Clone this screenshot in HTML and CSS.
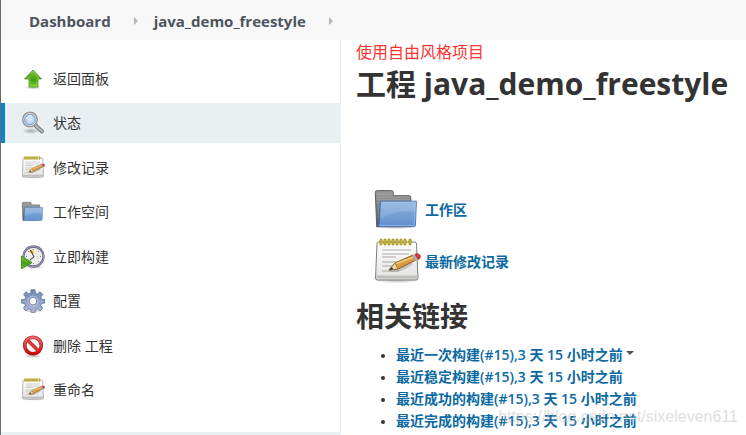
FILE: index.html
```html
<!DOCTYPE html>
<html lang="zh-CN">
<head>
  <meta charset="UTF-8">
  <meta name="viewport" content="width=device-width, initial-scale=1.0">
  <title>java_demo_freestyle [Jenkins]</title>
  <link rel="stylesheet" href="styles.css">
</head>
<body>
  <svg class="sprite" aria-hidden="true">
    <defs>
      <linearGradient id="green" x2="0" y2="1"><stop offset="0" stop-color="#86c943"/><stop offset=".6" stop-color="#43a00f"/><stop offset="1" stop-color="#7ed321"/></linearGradient>
      <linearGradient id="blue" x2="0" y2="1"><stop offset="0" stop-color="#8fb3de"/><stop offset="1" stop-color="#5e90ce"/></linearGradient>
      <linearGradient id="grey" x2="0" y2="1"><stop offset="0" stop-color="#9b9b9b"/><stop offset="1" stop-color="#5c5c5c"/></linearGradient>
      <linearGradient id="paper" x2="0" y2="1"><stop offset="0" stop-color="#ffffff"/><stop offset="1" stop-color="#e2e2e0"/></linearGradient>
      <linearGradient id="red" x2="0" y2="1"><stop offset="0" stop-color="#e86a6a"/><stop offset="1" stop-color="#cc0808"/></linearGradient>
      <linearGradient id="steel" x2="0" y2="1"><stop offset="0" stop-color="#7188b4"/><stop offset="1" stop-color="#adb9d5"/></linearGradient>
      <radialGradient id="lens"><stop offset="0" stop-color="#e4effb"/><stop offset="1" stop-color="#9dbfe8"/></radialGradient>
      <radialGradient id="shade"><stop offset="0" stop-color="#000" stop-opacity=".3"/><stop offset="1" stop-color="#000" stop-opacity="0"/></radialGradient>
    </defs>
    <symbol id="icon-up" viewBox="0 0 24 24">
      <ellipse cx="12" cy="20.500" rx="9" ry="2" fill="url(#shade)"/>
      <path d="M12 3 20.500 12H17v8H8v-8H3.500z" fill="url(#green)" stroke="#3e8d16" stroke-width=".7"/>
      <path d="M12 4.500 18 11h-2v8H9v-8H5.500" fill="none" stroke="#a9df73" stroke-width=".5"/>
    </symbol>
    <symbol id="icon-search" viewBox="0 0 24 24">
      <ellipse cx="10" cy="20" rx="9" ry="3" fill="url(#shade)"/>
      <path d="m14 14 7 6.500" stroke="#777" stroke-width="4" stroke-linecap="round"/>
      <path d="m14 14 7 6.500" stroke="#bbb" stroke-width="2" stroke-linecap="round"/>
      <circle cx="9" cy="8.500" r="7" fill="url(#lens)" stroke="#999" stroke-width="2"/>
      <circle cx="9" cy="8.500" r="6" fill="none" stroke="#f3f3f3"/>
      <circle cx="9" cy="8.500" r="5.300" fill="none" stroke="#5c8bc7" stroke-width=".8"/>
      <path d="M5.500 8C6 5 9 4 11 5" fill="none" stroke="#fff"/>
    </symbol>
    <symbol id="icon-notepad" viewBox="0 2 48 48">
      <ellipse cx="24" cy="44" rx="23" ry="3.500" fill="url(#shade)"/>
      <path d="M5.500 6h36q2 0 2 2l1.500 34q0 2-2 2H4.500q-2 0-2-2L4 8q0-2 1.500-2z" fill="url(#paper)" stroke="#7d7d7d"/>
      <path d="M3.500 39.500h41v3h-41z" fill="#bdbdbb"/>
      <path d="M9 14h29M9 18h27M9 21h14M9 26h25M9 30h19M9 35h17" stroke="#aaa"/>
      <g fill="#edda55" stroke="#9b8403"><rect x="7" y="3" width="2" height="6" rx="1"/><rect x="11" y="3" width="2" height="6" rx="1"/><rect x="15" y="3" width="2" height="6" rx="1"/><rect x="19" y="3" width="2" height="6" rx="1"/><rect x="23" y="3" width="2" height="6" rx="1"/><rect x="27" y="3" width="2" height="6" rx="1"/><rect x="31" y="3" width="2" height="6" rx="1"/><rect x="36" y="3" width="2" height="6" rx="1"/></g>
      <path d="M17 34q10 2 22-7" fill="none" stroke="#777" stroke-opacity=".35" stroke-width="3"/>
      <path d="m16 34 6-7 18-8 3 5-18 9z" fill="#d99b3e" stroke="#8b5a18"/>
      <path d="m22 28 19-7" stroke="#f3ca7b" stroke-width="1.500"/>
      <path d="m16 34 6-7 3 6z" fill="#eed9b5" stroke="#8b5a18" stroke-width=".7"/>
      <path d="m16 34 3-3 1 2z" fill="#222"/>
      <path d="m39 19.500 4-1.500 3 5-4 2z" fill="#aaa"/>
      <path d="m42 18 2-.5q5 1 3 5l-2 1z" fill="#dc3434" stroke="#a52020" stroke-width=".5"/>
    </symbol>
    <symbol id="icon-folder" viewBox="0 -2 52 52">
      <ellipse cx="24" cy="42" rx="23" ry="3" fill="url(#shade)"/>
      <path d="M4 42 2.500 5q0-2 2-2H20q2 0 2 2v3.500h17q2 0 2 2V42z" fill="url(#grey)" stroke="#555"/>
      <path d="M4 7h16M4 10h36M4 13h36M5 16h6M5 19h5M5 22h5M5 25h4M5 28h4M5 31h4" stroke="#c2c2c2" stroke-opacity=".5" stroke-width=".8"/>
      <path d="M8 14.500h39L46 40q0 2-2 2H4q2 0 2.500-3z" fill="url(#blue)" stroke="#3569aa"/>
      <path d="M9 15.500h37l-1 24q0 1.500-1.500 1.500H7" fill="none" stroke="#b3cdec" stroke-opacity=".7"/>
      <path d="M9 16h37l-.5 10Q25 23 8 34z" fill="#fff" fill-opacity=".13"/>
    </symbol>
    <symbol id="icon-clock" viewBox="0 0 24 24">
      <ellipse cx="13" cy="22" rx="10" ry="2" fill="url(#shade)"/>
      <circle cx="12.500" cy="11.500" r="10" fill="#ededeb" stroke="#6b6987" stroke-width="2.300"/>
      <circle cx="12.500" cy="11.500" r="10.200" fill="none" stroke="#a7a5bf" stroke-width=".8"/>
      <path d="M12.500 4v1M12.500 18v1M20 11.500h-1M6 11.500H5M18 6l-.7.700M18 17l-.7-.7M7 6l.7.700" stroke="#888"/>
      <path d="m7 7 5-3 1 5z" fill="#e9c64a"/>
      <path d="m9.500 5 3.500 7-4 3" fill="none" stroke="#333"/>
      <path d="M.5 11 11 17.500.5 24z" fill="url(#green)" stroke="#348514" stroke-width=".8"/>
    </symbol>
    <symbol id="icon-gear" viewBox="0 0 24 24">
      <ellipse cx="12" cy="22" rx="9" ry="2" fill="url(#shade)"/>
      <path fill="url(#steel)" fill-rule="evenodd" stroke="#536893" stroke-width=".7" d="m10 .8 4-.1.400 3.500 2 .8 2.700-2.200 2.700 2.700-2 2.800.8 2L24 10.500v3.500l-3.400.5-.9 2 2.200 2.800-2.700 2.600-2.800-2-2 .8-.5 2.700h-3.600l-.5-2.700-2-.8-2.800 2-2.600-2.600 2.100-2.800-.8-2L.4 14v-3.500l3.400-.3.800-2-2.100-2.800 2.600-2.700 2.800 2.200 1.800-.8zM12 8.300a3.800 3.800 0 1 0 0 7.600 3.800 3.800 0 0 0 0-7.600z"/>
      <circle cx="12" cy="12.100" r="5" fill="none" stroke="#c8d0e1" stroke-width=".8"/>
    </symbol>
    <symbol id="icon-stop" viewBox="0 0 24 24">
      <ellipse cx="12" cy="22" rx="9" ry="2" fill="url(#shade)"/>
      <circle cx="12" cy="11.500" r="8.300" fill="#fafafa" stroke="#b41717" stroke-width="3.600"/>
      <path d="m6.500 6 11 11" stroke="#bd1919" stroke-width="3.400"/>
      <circle cx="12" cy="11.500" r="8.300" fill="none" stroke="url(#red)" stroke-width="2.600"/>
      <path d="m6.500 6 11 11" stroke="#df3838" stroke-width="2.400"/>
    </symbol>
  </svg>

  <header class="breadcrumbs">
    <a href="#">Dashboard</a>
    <span class="separator"></span>
    <a href="#">java_demo_freestyle</a>
    <span class="separator"></span>
  </header>

  <div class="page-body">
    <aside class="side-panel">
      <nav class="tasks">
        <a class="task" href="#"><svg class="icon"><use href="#icon-up"/></svg>返回面板</a>
        <a class="task active" href="#"><svg class="icon"><use href="#icon-search"/></svg>状态</a>
        <a class="task" href="#"><svg class="icon"><use href="#icon-notepad"/></svg>修改记录</a>
        <a class="task" href="#"><svg class="icon"><use href="#icon-folder"/></svg>工作空间</a>
        <a class="task" href="#"><svg class="icon"><use href="#icon-clock"/></svg>立即构建</a>
        <a class="task" href="#"><svg class="icon"><use href="#icon-gear"/></svg>配置</a>
        <a class="task" href="#"><svg class="icon"><use href="#icon-stop"/></svg>删除 工程</a>
        <a class="task" href="#"><svg class="icon"><use href="#icon-notepad"/></svg>重命名</a>
      </nav>
      <div class="build-history"></div>
    </aside>

    <main class="main-panel">
      <div class="description">使用自由风格项目</div>
      <h1>工程 java_demo_freestyle</h1>
      <div class="shortcuts">
        <a href="#"><svg class="icon-large"><use href="#icon-folder"/></svg>工作区</a>
        <a href="#"><svg class="icon-large"><use href="#icon-notepad"/></svg>最新修改记录</a>
      </div>
      <h2>相关链接</h2>
      <ul class="permalinks">
        <li><a href="#">最近一次构建(#15),3 天 15 小时之前</a><button class="menu-arrow" aria-label="菜单"></button></li>
        <li><a href="#">最近稳定构建(#15),3 天 15 小时之前</a></li>
        <li><a href="#">最近成功的构建(#15),3 天 15 小时之前</a></li>
        <li><a href="#">最近完成的构建(#15),3 天 15 小时之前</a></li>
      </ul>
    </main>
  </div>
  <div class="watermark">https://blog.csdn.net/sixeleven611</div>
</body>
</html>
```
FILE: styles.css
```css
* {
  box-sizing: border-box;
}
body {
  margin: 0;
  min-height: 100vh;
  display: flex;
  flex-direction: column;
  border-left: 1px solid #6b6b6b;
  background: #fff;
  color: #333;
  font-family: "Open Sans", "Noto Sans CJK SC", sans-serif;
  font-size: 14px;
  line-height: 22px;
}
a {
  color: inherit;
  text-decoration: none;
}
.sprite {
  position: absolute;
  width: 0;
  height: 0;
}
.breadcrumbs {
  display: flex;
  align-items: center;
  height: 40px;
  padding: 2px 28px 0;
  background: #f8f8f8;
  color: #4d545d;
  font-size: 15px;
  font-weight: 700;
}
.separator {
  margin: 0 16px 0 23px;
  border: 4px solid transparent;
  border-left-color: #b5b5b5;
  border-right: 0;
}
.page-body {
  flex: 1;
  display: flex;
}
.side-panel {
  flex: 0 0 340px;
  display: flex;
  flex-direction: column;
  border-right: 1px solid #eaeff2;
}
.tasks {
  flex: 1;
  display: flex;
  flex-direction: column;
  justify-content: space-between;
  padding: 19px 0 22px;
}
.task {
  display: flex;
  align-items: center;
  gap: 8px;
  height: 40px;
  padding-left: 16px;
  border-left: 4px solid transparent;
}
.task.active {
  background: #eaeff2;
  border-left-color: #0b84cf;
}
.icon {
  width: 24px;
  height: 24px;
}
.build-history {
  height: 3px;
  background: #eaeff2;
}
.main-panel {
  flex: 1;
  min-width: 0;
  padding-left: 15px;
}
.description {
  color: #f33;
  font-size: 16px;
  line-height: 24px;
}
h1, h2 {
  margin: 0;
  line-height: 40px;
  white-space: nowrap;
}
h1 {
  font-size: 30px;
}
h2 {
  font-size: 28px;
}
.shortcuts {
  display: flex;
  flex-direction: column;
  gap: 4px;
  padding: 82px 0 10px 17px;
}
.shortcuts a {
  display: flex;
  align-items: center;
  gap: 4px;
}
.shortcuts a, .permalinks a {
  color: #0b6aa2;
  font-weight: 600;
}
.icon-large {
  width: 48px;
  height: 48px;
}
.permalinks {
  margin: 8px 0 0;
  padding-left: 40px;
}
.permalinks li::marker {
  font-size: 11px;
}
.menu-arrow {
  width: 8px;
  height: 4px;
  margin-left: 3px;
  padding: 0;
  border: 4px solid transparent;
  border-top-color: #4d545d;
  border-bottom: 0;
  background: none;
  vertical-align: 5px;
}
.watermark {
  position: absolute;
  right: 8px;
  bottom: 7px;
  color: rgba(190, 190, 190, 0.5);
  font-family: "Liberation Sans", sans-serif;
  font-size: 16px;
  pointer-events: none;
}
```
